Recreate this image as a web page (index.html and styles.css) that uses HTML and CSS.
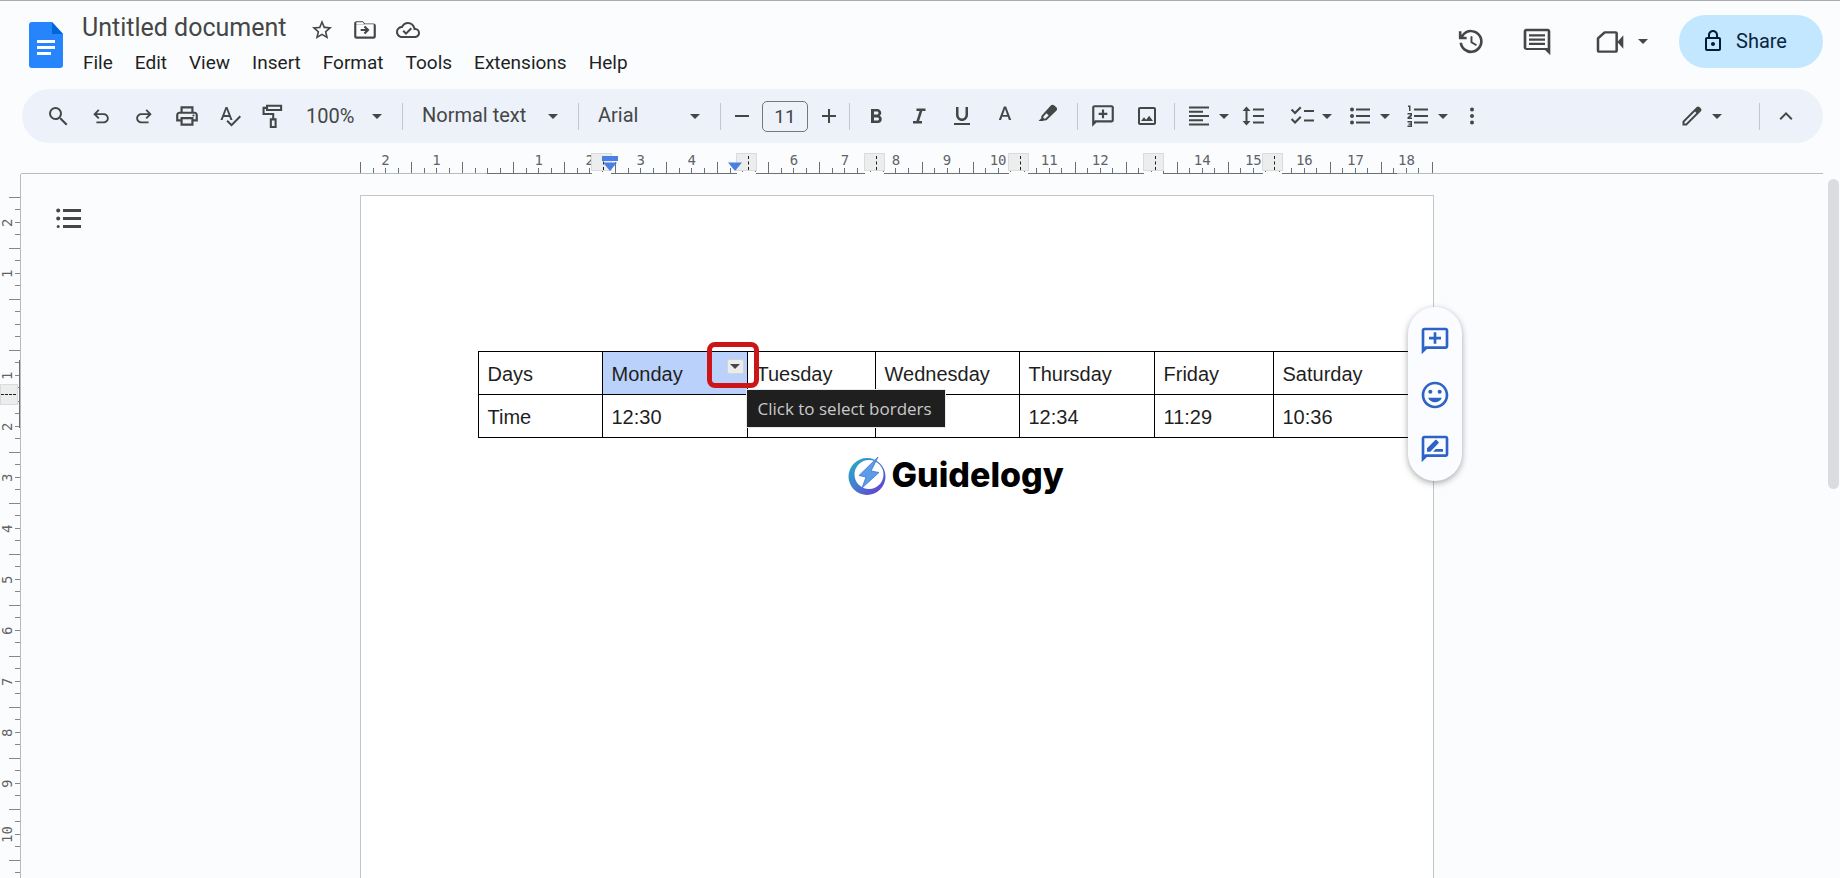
FILE: index.html
```html
<!DOCTYPE html>
<html lang="en">
<head>
<meta charset="utf-8">
<title>Untitled document</title>
<link rel="stylesheet" href="styles.css">
</head>
<body>
<header class="header">
  <svg class="docs-logo" viewBox="0 0 34 46" aria-hidden="true"><path fill="#2684fc" d="M3 0h20l11 12v31a3 3 0 0 1-3 3H3a3 3 0 0 1-3-3V3a3 3 0 0 1 3-3z"/><path fill="#0066da" d="M23 0l11 12H23z"/><path fill="#fff" d="M8 18h18v3H8zM8 24h18v3H8zM8 30h14v3H8z"/></svg>
  <div class="heading">
    <div class="title-row">
      <h1 class="title">Untitled document</h1>
      <button class="plain" aria-label="Star"><svg class="ic24" viewBox="0 0 24 24"><path d="M22 9.24l-7.19-.62L12 2 9.19 8.63 2 9.24l5.46 4.73L5.82 21 12 17.27 18.18 21l-1.63-7.03L22 9.24zM12 15.4l-3.76 2.27 1-4.28-3.32-2.88 4.38-.38L12 6.1l1.71 4.04 4.38.38-3.32 2.88 1 4.28L12 15.4z"/></svg></button>
      <button class="plain" aria-label="Move"><svg class="ic26" viewBox="0 0 24 24"><path d="M20 6h-8l-2-2H4c-1.1 0-2 .9-2 2v12c0 1.100.9 2 2 2h16c1.100 0 2-.9 2-2V8c0-1.100-.9-2-2-2zm0 12H4V6.800h16V18zM4 4.800h6l1.500 2.200H4zM12.200 16l4-4-4-4-1.400 1.400 1.600 1.600H8v2h4.400l-1.600 1.600z"/></svg></button>
      <button class="plain" aria-label="Saved to Drive"><svg class="ic24" viewBox="0 0 24 24"><path d="M19.350 10.040A7.490 7.490 0 0 0 12 4C9.110 4 6.600 5.640 5.350 8.040A5.994 5.994 0 0 0 0 14c0 3.310 2.690 6 6 6h13c2.760 0 5-2.240 5-5 0-2.640-2.050-4.780-4.650-4.960zM19 18H6c-2.210 0-4-1.790-4-4 0-2.050 1.530-3.760 3.560-3.970l1.070-.11.5-.95A5.469 5.469 0 0 1 12 6c2.620 0 4.880 1.860 5.390 4.430l.3 1.500 1.530.11A2.980 2.980 0 0 1 22 15c0 1.650-1.350 3-3 3zm-9-3.820l-2.090-2.090L6.500 13.500 10 17l6.010-6.010-1.410-1.410z"/></svg></button>
    </div>
    <nav class="menu">
      <button>File</button><button>Edit</button><button>View</button><button>Insert</button><button>Format</button><button>Tools</button><button>Extensions</button><button>Help</button>
    </nav>
  </div>
  <div class="actions">
    <button class="plain" aria-label="Version history"><svg class="ic31" viewBox="0 0 24 24"><path d="M13.500 8H12v5l4.280 2.540.72-1.210-3.500-2.080zM12.500 3A9 9 0 0 0 5 7V4H3v6.200h6V8.300H6.400A7 7 0 1 1 5.500 13H3.500a9 9 0 1 0 9-10z"/></svg></button>
    <button class="plain" aria-label="Comments"><svg class="ic32" viewBox="0 0 24 24"><path d="M21.990 4c0-1.100-.89-2-1.990-2H4c-1.100 0-2 .9-2 2v12c0 1.100.9 2 2 2h14l4 4-.01-18zM20 4v12.500H4V4h16zM6 12.500h12v1.800H6zM6 9.300h12v1.800H6zM6 6.100h12v1.800H6z"/></svg></button>
    <button class="plain meet" aria-label="Meet"><svg class="ic32" viewBox="0 0 24 24"><path fill="none" stroke="#444746" stroke-width="1.900" stroke-linejoin="round" d="M8 4h8a1 1 0 0 1 1 1v14a1 1 0 0 1-1 1H4a1 1 0 0 1-1-1V9z" transform="translate(0 1.200) scale(1 .9)"/><path d="M17.500 12L22 7v10z"/></svg><svg class="caret" viewBox="0 0 10 5"><path d="M0 0h10L5 5z"/></svg></button>
    <button class="share"><svg class="lock" viewBox="0 0 24 24"><path d="M18 8h-1V6c0-2.760-2.240-5-5-5S7 3.240 7 6v2H6c-1.100 0-2 .9-2 2v10c0 1.100.9 2 2 2h12c1.100 0 2-.9 2-2V10c0-1.100-.9-2-2-2zM9 6c0-1.660 1.340-3 3-3s3 1.340 3 3v2H9V6zm9 14H6V10h12v10zm-6-3c1.100 0 2-.9 2-2s-.9-2-2-2-2 .9-2 2 .9 2 2 2z"/></svg>Share</button>
  </div>
</header>

<div class="toolbar" role="toolbar">
  <button class="tool" aria-label="Search"><svg class="ic24" viewBox="0 0 24 24"><path d="M15.500 14h-.79l-.28-.27A6.471 6.471 0 0 0 16 9.500 6.500 6.500 0 1 0 9.500 16c1.610 0 3.090-.59 4.230-1.570l.27.28v.79l6 6 1.490-1.490-5.990-6.010zm-6 0C7.010 14 5 11.990 5 9.500S7.010 5 9.500 5 14 7.010 14 9.500 11.990 14 9.500 14z"/></svg></button>
  <button class="tool" aria-label="Undo"><svg class="ic22" viewBox="0 0 24 24"><path d="M7 20v-2h7.600c2.200 0 3.900-1.500 3.900-3.500S16.800 11 14.600 11H7.400l2.900 2.900L8.900 15.300 3.600 10l5.300-5.300 1.400 1.400L7.400 9h7.200c3.300 0 5.900 2.300 5.900 5.500S17.900 20 14.600 20z"/></svg></button>
  <button class="tool" aria-label="Redo"><svg class="ic22" viewBox="0 0 24 24"><path transform="matrix(-1 0 0 1 24 0)" d="M7 20v-2h7.600c2.200 0 3.900-1.500 3.900-3.500S16.800 11 14.600 11H7.400l2.900 2.900L8.900 15.300 3.600 10l5.300-5.300 1.400 1.400L7.400 9h7.200c3.300 0 5.900 2.300 5.900 5.500S17.900 20 14.600 20z"/></svg></button>
  <button class="tool" aria-label="Print"><svg class="ic26" viewBox="0 0 24 24"><path d="M19 8h-1V3H6v5H5c-1.660 0-3 1.340-3 3v6h4v4h12v-4h4v-6c0-1.660-1.340-3-3-3zM8 5h8v3H8V5zm8 12v2H8v-4h8v2zm2-2v-2H6v2H4v-4c0-.55.45-1 1-1h14c.55 0 1 .45 1 1v4h-2z"/><circle cx="18" cy="11.500" r="1"/></svg></button>
  <button class="tool" aria-label="Spelling check"><svg class="ic24" viewBox="0 0 24 24"><path d="M12.450 16h2.090L9.430 3H7.570L2.460 16h2.090l1.120-3h5.640l1.140 3zm-6.020-5L8.500 5.480 10.570 11H6.430zm15.160.59l-8.090 8.090L9.830 16l-1.410 1.410 5.090 5.090L23 13l-1.410-1.410z"/></svg></button>
  <button class="tool" aria-label="Paint format"><svg class="ic26" viewBox="0 0 24 24"><path fill="none" stroke="#444746" stroke-width="1.900" d="M6.500 2.500h13v4h-13zM6.500 4.500H3.300v5.600h8.900v5M10 15.100h4.400v7H10z"/></svg></button>
  <label class="pick zoom"><select aria-label="Zoom"><option>100%</option></select><svg class="caret" viewBox="0 0 10 5"><path d="M0 0h10L5 5z"/></svg></label>
  <span class="rule"></span>
  <label class="pick style"><select aria-label="Styles"><option>Normal text</option></select><svg class="caret" viewBox="0 0 10 5"><path d="M0 0h10L5 5z"/></svg></label>
  <span class="rule"></span>
  <label class="pick font"><select aria-label="Font"><option>Arial</option></select><svg class="caret" viewBox="0 0 10 5"><path d="M0 0h10L5 5z"/></svg></label>
  <span class="rule"></span>
  <button class="tool step" aria-label="Decrease font size"><svg class="ic24" viewBox="0 0 24 24"><path d="M5 11h14v2H5z"/></svg></button>
  <input class="size" aria-label="Font size" value="11">
  <button class="tool step" aria-label="Increase font size"><svg class="ic24" viewBox="0 0 24 24"><path d="M19 13h-6v6h-2v-6H5v-2h6V5h2v6h6z"/></svg></button>
  <span class="rule"></span>
  <button class="tool first" aria-label="Bold"><svg class="ic24" viewBox="0 0 24 24"><path d="M15.600 11.790c.97-.67 1.650-1.770 1.650-2.790 0-2.260-1.750-4-4-4H7v14h7.040c2.090 0 3.710-1.700 3.710-3.790 0-1.520-.86-2.820-2.150-3.420zM10 7.500h3c.83 0 1.500.67 1.500 1.500s-.67 1.500-1.500 1.500h-3v-3zm3.500 9H10v-3h3.500c.83 0 1.500.67 1.500 1.500s-.67 1.500-1.500 1.500z"/></svg></button>
  <button class="tool" aria-label="Italic"><svg class="ic24" viewBox="0 0 24 24"><path d="M9.500 4.500v2.500h3.100l-3.200 10H6V19.500h9V17h-2.900l3.200-10h3.200V4.500z"/></svg></button>
  <button class="tool" aria-label="Underline"><svg class="ic24" viewBox="0 0 24 24"><path d="M12 17c3.310 0 6-2.690 6-6V3h-2.500v8c0 1.930-1.570 3.500-3.500 3.500S8.500 12.930 8.500 11V3H6v8c0 3.310 2.690 6 6 6zm-8 2v2h16v-2H4z"/></svg></button>
  <button class="tool" aria-label="Text color"><svg class="ic24" viewBox="0 0 24 24"><path d="M10.900 2.500L5.800 16h2.300l1.100-3.200h5.600l1.100 3.200h2.300L13.100 2.500zm-1 8.400L12 5l2.100 5.900z"/></svg></button>
  <button class="tool" aria-label="Highlight color"><svg class="ic24" viewBox="0 0 24 24"><path fill-rule="evenodd" d="M2.500 17l3-3c-.5-1-.3-2 .5-2.800L14.800 1.500c1-1 2.500-1 3.500 0l2 1.800c1 1 1 2.500 0 3.500l-9.300 9c-.8.800-2 .900-3 .4L7.200 17zM10.500 9.200l-3 3.300c-.4.400-.4.900 0 1.300l.6.600c.4.400.9.400 1.300 0l3.300-3z"/></svg></button>
  <span class="rule late"></span>
  <button class="tool insert" aria-label="Add comment"><svg class="ic26" viewBox="0 0 24 24"><path d="M22 4v12c0 1.100-.9 2-2 2H6l-4 4V4c0-1.100.9-2 2-2h16c1.100 0 2 .9 2 2zM4 4v12.500l.500-.500H20V4zM11 6h2v3h3v2h-3v3h-2v-3H8V9h3z"/></svg></button>
  <button class="tool insert" aria-label="Insert image"><svg class="ic24" viewBox="0 0 24 24"><path d="M19 5v14H5V5h14m0-2H5c-1.100 0-2 .9-2 2v14c0 1.100.9 2 2 2h14c1.100 0 2-.9 2-2V5c0-1.100-.9-2-2-2zm-4.860 8.860l-3 3.870L9 13.140 6 17h12l-3.860-5.140z"/></svg></button>
  <span class="rule"></span>
  <button class="tool split lead" aria-label="Align"><svg class="ic24" viewBox="0 0 24 24"><path d="M2 2.500h20v2H2zM2 6.800h14v2H2zM2 11h20v2H2zM2 15.200h14v2H2zM2 19.500h20v2H2z"/></svg><svg class="caret" viewBox="0 0 10 5"><path d="M0 0h10L5 5z"/></svg></button>
  <button class="tool narrow" aria-label="Line spacing"><svg class="ic24" viewBox="0 0 24 24"><path d="M5.500 2.500L9.500 7H6.500v10h3l-4 4.500L1.500 17h3V7h-3zM12 4.500h11v2H12zM12 11h11v2H12zM12 17.500h11v2H12z"/></svg></button>
  <button class="tool split gap" aria-label="Checklist"><svg class="ic24" viewBox="0 0 24 24"><path d="M14 6h10v2H14zM14 15.500h10v2H14zM5 10.500L.8 6.300l1.500-1.500L5 7.500l5-5L11.500 4zM5 20L.8 15.800l1.500-1.500L5 17l5-5 1.500 1.500z"/></svg><svg class="caret" viewBox="0 0 10 5"><path d="M0 0h10L5 5z"/></svg></button>
  <button class="tool split" aria-label="Bulleted list"><svg class="ic24" viewBox="0 0 24 24"><path d="M8 4.500h14v2H8zM8 11h14v2H8zM8 17.500h14v2H8z"/><circle cx="4" cy="5.500" r="2"/><circle cx="4" cy="12" r="2"/><circle cx="4" cy="18.500" r="2"/></svg><svg class="caret" viewBox="0 0 10 5"><path d="M0 0h10L5 5z"/></svg></button>
  <button class="tool split" aria-label="Numbered list"><svg class="ic24" viewBox="0 0 24 24"><path d="M8 4.500h14v2H8zM8 11h14v2H8zM8 17.500h14v2H8zM2 1.500h2.500V7H3V3H2zM1.500 9H6v3L3.800 13.500H6V15H1.500v-1.800L4.300 11v-.5H1.500zM1.500 17H6v6H1.500v-1.400h3v-.9H2.500v-1.300h2v-1h-3z"/></svg><svg class="caret" viewBox="0 0 10 5"><path d="M0 0h10L5 5z"/></svg></button>
  <button class="tool narrow" aria-label="More"><svg class="ic24" viewBox="0 0 24 24"><circle cx="12" cy="5.500" r="2"/><circle cx="12" cy="12" r="2"/><circle cx="12" cy="18.500" r="2"/></svg></button>
  <button class="tool split mode" aria-label="Editing mode"><svg class="ic24" viewBox="0 0 24 24"><path fill-rule="evenodd" d="M2.500 21.500v-4.200L16.700 3.100c.8-.8 1.900-.8 2.700 0l1.500 1.500c.8.800.8 1.900 0 2.700L6.700 21.500zM4.500 19.500h1.400L16.400 9l-1.400-1.400L4.500 18.100z"/></svg><svg class="caret" viewBox="0 0 10 5"><path d="M0 0h10L5 5z"/></svg></button>
  <span class="rule end"></span>
  <button class="tool hide" aria-label="Hide menus"><svg class="ic24" viewBox="0 0 24 24"><path d="M12 8l-6.500 6.500 1.400 1.400L12 10.800l5.100 5.100 1.400-1.400z"/></svg></button>
</div>

<div class="ruler-row">
  <div class="ruler">
    <span>2</span><span>1</span><span></span><span>1</span><span>2</span><span>3</span><span>4</span><span></span><span>6</span><span>7</span><span>8</span><span>9</span><span>10</span><span>11</span><span>12</span><span></span><span>14</span><span>15</span><span>16</span><span>17</span><span>18</span>
    <i class="extent"></i>
    <i class="stop s1"></i><i class="stop s2"></i><i class="stop s3"></i><i class="stop s4"></i><i class="stop s5"></i><i class="stop s6"></i>
    <svg class="indent left" viewBox="0 0 16 16"><path d="M0 1h16v5H0zM1 7.500h14L8 16z"/></svg>
    <svg class="indent right" viewBox="0 0 16 16"><path d="M1 7.500h14L8 16z"/></svg>
  </div>
</div>

<main class="workspace">
  <div class="vruler">
    <div class="vscale">
      <span>2</span><span>1</span><span></span><span>1</span><span>2</span><span>3</span><span>4</span><span>5</span><span>6</span><span>7</span><span>8</span><span>9</span><span>10</span><span></span>
      <i class="vextent"></i>
      <i class="vstop"></i>
    </div>
  </div>
  <div class="canvas">
    <button class="outline" aria-label="Show outline"><svg viewBox="0 0 26 20"><path d="M7 1h18v3H7zM7 9h18v3H7zM7 17h18v3H7z"/><circle cx="2.200" cy="2.500" r="2"/><circle cx="2.200" cy="10.500" r="2"/><circle cx="2.200" cy="18.500" r="1.500"/></svg></button>
    <article class="page">
      <table class="grid">
        <colgroup><col class="c1"><col class="c2"><col class="c3"><col class="c4"><col class="c5"><col class="c6"><col class="c7"></colgroup>
        <tr><td>Days</td><td class="picked">Monday<button class="border-btn" aria-label="Click to select borders"><svg class="caret" viewBox="0 0 10 5"><path d="M0 0h10L5 5z"/></svg></button><span class="callout"></span><span class="tooltip" role="tooltip">Click to select borders</span></td><td>Tuesday</td><td>Wednesday</td><td>Thursday</td><td>Friday</td><td>Saturday</td></tr>
        <tr><td>Time</td><td>12:30</td><td></td><td></td><td>12:34</td><td>11:29</td><td>10:36</td></tr>
      </table>
      <div class="brand">
        <svg class="bolt" viewBox="0 0 38 40"><defs><linearGradient id="g" x1="0" y1="0" x2="1" y2="1"><stop offset="0" stop-color="#22b3c3"/><stop offset=".5" stop-color="#4579d2"/><stop offset="1" stop-color="#6b35cf"/></linearGradient></defs><path fill="url(#g)" fill-rule="evenodd" d="M19 2a18.500 18.500 0 1 1 0 37 18.500 18.500 0 0 1 0-37zM21 4a14.500 14.500 0 1 0 0 29 14.500 14.500 0 0 0 0-29z"/><path fill="#5a9bea" stroke="#3f74d3" stroke-width=".8" d="M30 1L11 19.500l7 1.500-4 11L31 16.500l-8-1.500z"/></svg>
        <span>Guidelogy</span>
      </div>
      <div class="side-panel">
        <button aria-label="Add comment"><svg class="ic32" viewBox="0 0 24 24"><path d="M22 4v12c0 1.100-.9 2-2 2H6l-4 4V4c0-1.100.9-2 2-2h16c1.100 0 2 .9 2 2zM4 4v12.500l.500-.500H20V4zM11 5.500h2v3.300h3.500v2H13V14h-2v-3.200H7.500v-2H11z"/></svg></button>
        <button aria-label="Add emoji reaction"><svg class="ic32" viewBox="0 0 24 24"><path d="M11.990 2C6.470 2 2 6.480 2 12s4.470 10 9.990 10C17.520 22 22 17.520 22 12S17.520 2 11.990 2zM12 20c-4.420 0-8-3.580-8-8s3.580-8 8-8 8 3.580 8 8-3.580 8-8 8zm3.500-9c.83 0 1.500-.67 1.500-1.500S16.330 8 15.500 8 14 8.670 14 9.500s.67 1.500 1.500 1.500zm-7 0c.83 0 1.500-.67 1.500-1.500S9.330 8 8.500 8 7 8.670 7 9.500 7.670 11 8.500 11zm3.500 6.500c2.330 0 4.310-1.460 5.110-3.500H6.890c.8 2.040 2.780 3.500 5.110 3.500z"/></svg></button>
        <button aria-label="Suggest edits"><svg class="ic32" viewBox="0 0 24 24"><path d="M22 4v12c0 1.100-.9 2-2 2H6l-4 4V4c0-1.100.9-2 2-2h16c1.100 0 2 .9 2 2zM4 4v12.500l.500-.500H20V4zM6 14v-2.500l6.200-6.200c.3-.3.700-.3 1 0l1.400 1.400c.3.300.3.700 0 1L8.500 14zM18 14h-7.500l2-2H18z"/></svg></button>
      </div>
    </article>
  </div>
  <div class="scroll"><div class="thumb"></div></div>
</main>
</body>
</html>
```
FILE: styles.css
```css
* { box-sizing: border-box; }
body {
  margin: 0;
  height: 100vh;
  display: flex;
  flex-direction: column;
  overflow: hidden;
  background: #fbfcfe;
  border-top: 1px solid #a9abae;
  font-family: Roboto, "Liberation Sans", sans-serif;
  color: #1f1f1f;
}
button, select, input { font: inherit; color: inherit; border: 0; background: none; padding: 0; margin: 0; }
svg { display: block; fill: #444746; flex: none; }
.ic22 { width: 22px; height: 22px; }
.ic24 { width: 24px; height: 24px; }
.ic26 { width: 26px; height: 26px; }
.ic31 { width: 31px; height: 31px; }
.ic32 { width: 32px; height: 32px; }
.caret { width: 10px; height: 5px; }

/* Header */
.header { display: flex; align-items: flex-start; height: 88px; padding: 9px 17px 0 29px; flex: none; }
.docs-logo { width: 34px; height: 46px; margin-top: 12px; }
.heading { margin-left: 19px; }
.title-row { display: flex; align-items: center; height: 36px; }
.title { margin: 0 24px 0 0; font-size: 25px; font-weight: 400; line-height: 32px; color: #444746; }
.plain { display: flex; align-items: center; }
.title-row .plain { margin-right: 18px; }
.title-row .plain svg { margin-top: 3px; }
.menu { display: flex; gap: 22px; margin-top: 2px; font-size: 19px; line-height: 30px; padding-left: 1px; }
.actions { display: flex; align-items: center; gap: 35px; margin-left: auto; margin-top: 5px; }
.meet { gap: 12px; margin-left: 6px; }
.share {
  display: flex; align-items: center; gap: 11px;
  width: 144px; height: 53px; padding: 0 0 2px 22px;
  border-radius: 27px; background: #c2e7ff; color: #0b2540;
  font-size: 20px;
}
.lock { width: 24px; height: 24px; fill: #001d35; }
.meet + .share { margin-left: -4px; }

/* Toolbar */
.toolbar {
  display: flex; align-items: center; flex: none;
  height: 54px; margin: 0 17px 0 22px; padding-left: 14px;
  border-radius: 27px; background: #edf1fa; color: #444746;
  font-size: 20px;
}
.tool { display: flex; align-items: center; justify-content: center; width: 43px; height: 40px; }
.step { width: 41px; }
.insert { width: 44px; }
.narrow { width: 31px; }
.split { width: 58px; gap: 8px; }
.lead { margin-left: 4px; }
.gap { margin-left: 14px; }
.first { margin-left: 4px; }
.rule { width: 1px; height: 27px; background: #c3c7cf; }
.late { margin: 0 3px 0 8px; }
.insert + .rule { margin-left: 5px; }
.pick { position: relative; display: flex; align-items: center; }
.pick select { appearance: none; width: 100%; height: 40px; outline: none; }
.pick .caret { position: absolute; right: 20px; pointer-events: none; }
.zoom { width: 108px; }
.zoom select { padding-left: 12px; }
.style { width: 175px; }
.style select { padding: 0 0 3px 19px; }
.font { width: 141px; }
.font select { padding: 0 0 3px 19px; }
.size { width: 46px; height: 31px; border: 1px solid #747775; border-radius: 5px; text-align: center; font-size: 19px; }
.mode { margin-left: auto; }
.end { margin: 0 4px 0 29px; }
.hide { margin-right: 16px; }

/* Horizontal ruler */
.ruler-row { flex: none; height: 31px; margin: 0 17px 0 21px; padding-right: 51px; border-bottom: 1px solid #b9bbbd; }
.ruler {
  position: relative; display: flex;
  width: 100%; max-width: 1073px; height: 30px; margin: 0 auto;
  border-right: 1px solid #6d7073;
  border-image: linear-gradient(transparent 62%, #6d7073 62%) 1;
}
.ruler span {
  flex: 1; height: 30px; padding-top: 8px; text-align: center;
  font: 14px/18px "DejaVu Sans Mono", monospace; color: #5f6368;
  background:
    linear-gradient(#6d7073, #6d7073) 0 100% / 1px 11px no-repeat,
    linear-gradient(#6d7073, #6d7073) 25% 100% / 1px 5px no-repeat,
    linear-gradient(#6d7073, #6d7073) 50% 100% / 1px 5px no-repeat,
    linear-gradient(#6d7073, #6d7073) 75% 100% / 1px 5px no-repeat;
}
.extent { position: absolute; left: 127px; top: 30px; width: 910px; height: 1px; background: #6d7073; }
.stop {
  position: absolute; top: 10px; width: 21px; height: 18px;
  border: 1px solid #d9dbdc; background: #eceeee;
}
.stop::before { content: ""; position: absolute; left: 11px; top: 2px; height: 14px; border-left: 1px dashed #1f1f1f; }
.stop::after { content: ""; position: absolute; left: 0; top: 18px; width: 19px; height: 2px; background: #fbfcfe; }
.s1 { left: 231px; }
.s2 { left: 376px; }
.s3 { left: 504px; }
.s4 { left: 648px; }
.s5 { left: 783px; }
.s6 { left: 902px; }
.indent { position: absolute; top: 12px; width: 16px; height: 16px; fill: #4a80e4; }
.left { left: 242px; }
.right { left: 367px; }

/* Workspace */
.workspace { flex: 1; min-height: 0; display: grid; grid-template-columns: 21px 1fr 17px; }
.vruler { position: relative; border-right: 1px solid #b9bbbd; padding-top: 23px; overflow: hidden; }
.vscale { position: relative; display: grid; grid-auto-rows: 51px; }
.vscale span {
  writing-mode: vertical-rl; transform: rotate(180deg);
  text-align: center;
  font: 14px/14px "DejaVu Sans Mono", monospace; color: #5f6368;
  background:
    linear-gradient(#85888b, #85888b) 0 100% / 11px 1px no-repeat,
    linear-gradient(#85888b, #85888b) 0 25% / 5px 1px no-repeat,
    linear-gradient(#85888b, #85888b) 0 50% / 5px 1px no-repeat,
    linear-gradient(#85888b, #85888b) 0 75% / 5px 1px no-repeat;
}
.vextent { position: absolute; right: -1px; top: 163px; width: 2px; height: 68px; background: #6d7073; }
.vstop { position: absolute; left: 0; top: 187px; width: 18px; height: 21px; border: 1px solid #d9dbdc; background: #eceeee; }
.vstop::before { content: ""; position: absolute; left: 0; top: 9px; width: 15px; border-top: 1px dashed #1f1f1f; }
.canvas { position: relative; padding: 21px 51px 0 0; display: flex; justify-content: center; }
.outline { position: absolute; left: 35px; top: 34px; }
.outline svg { width: 26px; height: 20px; }
.page {
  position: relative; width: 100%; max-width: 1074px;
  padding: 155px 0 0 117px;
  border: 1px solid #c4c6c8; border-bottom: 0; background: #fff;
}
.grid { width: 944px; table-layout: fixed; border-collapse: collapse; font: 20px/24px "Liberation Sans", Arial, sans-serif; color: #1f1f1f; }
.grid td { height: 43px; padding: 2px 0 0 9px; border: 1px solid #000; }
.c1 { width: 124px; }
.c2 { width: 145px; }
.c3 { width: 128px; }
.c4 { width: 144px; }
.c5 { width: 135px; }
.c6 { width: 119px; }
.c7 { width: 149px; }
.picked { position: relative; background: #bad1fb; }
.border-btn {
  position: absolute; right: 3px; top: 7px; width: 17px; height: 15px;
  display: flex; align-items: center; justify-content: center;
  background: #ececec; border: 1px solid #d2d4d8; border-radius: 2px;
}
.callout { position: absolute; right: -12px; top: -10px; width: 52px; height: 46px; border: 5px solid #cc1517; border-radius: 8px; }
.tooltip {
  position: absolute; z-index: 2; left: 144px; top: 38px;
  padding: 0 13px 0 11px; background: #1f1f1f; color: #c9c9c9;
  outline: 1px solid #e9e9e9; white-space: nowrap;
  font: 17px/37px "Open Sans", "Noto Sans", sans-serif;
}
.brand { display: flex; align-items: center; gap: 6px; margin: 17px 0 0 370px; font: 800 34px/40px Inter, sans-serif; color: #000; }
.bolt { width: 38px; height: 40px; }
.brand span { padding-bottom: 2px; }
.side-panel {
  position: absolute; right: -29px; top: 111px; width: 54px;
  display: flex; flex-direction: column; align-items: center; gap: 22px;
  padding: 18px 0 16px; border-radius: 27px; background: #fafcff;
  box-shadow: 0 2px 6px rgba(60, 64, 67, .45);
}
.side-panel svg { fill: #2c63c4; }
.scroll { padding: 5px 1px 0 5px; }
.thumb { height: 310px; border-radius: 6px; background: #dadce0; }
```
